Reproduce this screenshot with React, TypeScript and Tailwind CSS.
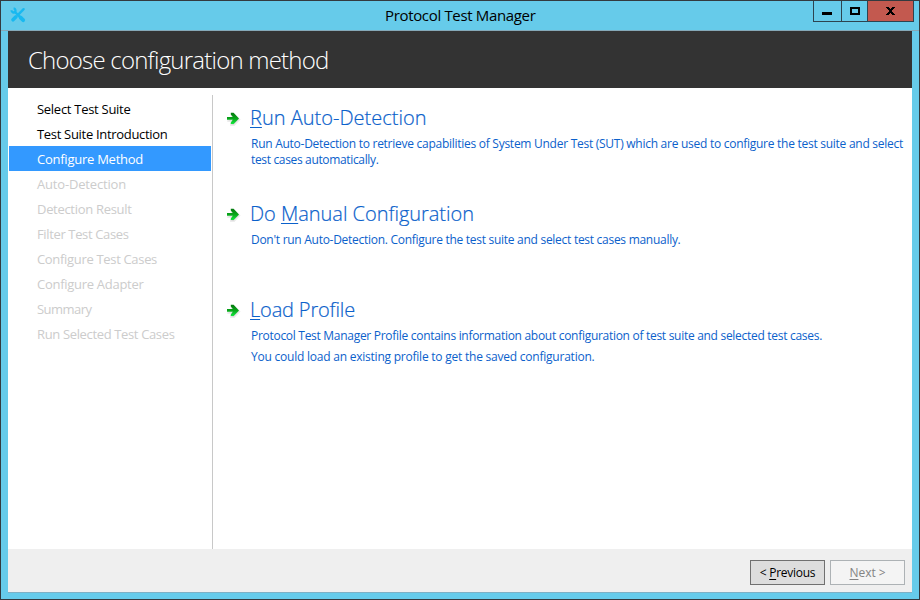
import { ReactNode, useLayoutEffect, useRef, useState } from "react";

/* Single line of text tracked so that it fills a given width. */
function Line({ width, children }: { width: number; children: ReactNode }) {
  const ref = useRef<HTMLSpanElement>(null);
  const [tracking, setTracking] = useState(0);
  useLayoutEffect(() => {
    const el = ref.current;
    if (!el) return;
    const count = (el.textContent ?? "").length;
    setTracking((width - el.getBoundingClientRect().width) / count);
  }, [width]);
  return (
    <span ref={ref} className="inline-block whitespace-pre" style={{ letterSpacing: tracking }}>
      {children}
    </span>
  );
}

function Key({ children }: { children: ReactNode }) {
  return <span className="underline decoration-1 underline-offset-2">{children}</span>;
}

const steps = [
  { label: "Select Test Suite", width: 93.5, state: "done" },
  { label: "Test Suite Introduction", width: 130.5, state: "done" },
  { label: "Configure Method", width: 106, state: "current" },
  { label: "Auto-Detection", width: 89, state: "todo" },
  { label: "Detection Result", width: 94.5, state: "todo" },
  { label: "Filter Test Cases", width: 91.5, state: "todo" },
  { label: "Configure Test Cases", width: 120, state: "todo" },
  { label: "Configure Adapter", width: 106.5, state: "todo" },
  { label: "Summary", width: 54.5, state: "todo" },
  { label: "Run Selected Test Cases", width: 137.5, state: "todo" },
];

const stepStyle: Record<string, string> = {
  done: "text-black",
  current: "bg-[#3399ff] text-white",
  todo: "text-[#cccccc]",
};

function ToolsIcon() {
  return (
    <svg width="16" height="16" viewBox="0 0 16 16" fill="none" stroke="#18b9f0">
      <path d="M4 4 11 11" strokeWidth="2.4" />
      <path d="M1.5 3.2C1.5 5.6 4 6 5 5S5.8 1.8 3.6 1.4" strokeWidth="2.2" />
      <path d="M10.6 10.6 13.2 13.2" strokeWidth="3.8" strokeLinecap="round" />
      <path d="M13.6 2.2 8 7.8" strokeWidth="2.4" strokeLinecap="round" />
      <path d="M6 9.8 3 12.8" strokeWidth="3.6" strokeLinecap="round" />
    </svg>
  );
}

function Arrow() {
  return (
    <svg className="mt-[6px] shrink-0" width="16" height="16" viewBox="0 0 16 16">
      <defs>
        <linearGradient id="arrowGreen" x1="0" y1="0" x2="0" y2="1">
          <stop offset="0" stopColor="#067a10" />
          <stop offset="0.5" stopColor="#08a51a" />
          <stop offset="1" stopColor="#14e83e" />
        </linearGradient>
      </defs>
      <path
        d="M3 8.2h5.5L6.5 5.4V3.4h2.6L14.6 8.6 9.1 14.4H5.8V12.6L8 10.2H3z"
        fill="#c4c4c4"
        stroke="#e4e4e4"
        strokeWidth="1.4"
        opacity="0.7"
      />
      <path d="M2 6.1h5.8L5.8 3.4V1.8h2.8L14 7.4 8.6 13H5.8V11.4L7.8 8.8H2z" fill="url(#arrowGreen)" />
    </svg>
  );
}

function Choice({ title, children }: { title: ReactNode; children: ReactNode }) {
  return (
    <div className="flex h-24 gap-[9px] text-[#0b61cb]">
      <Arrow />
      <div>
        <div className="h-[31px] text-[20px] font-light leading-[26px] [-webkit-text-stroke:0.2px_#0b61cb]">{title}</div>
        <div className="ml-px text-[12px] leading-4">{children}</div>
      </div>
    </div>
  );
}

export default function App() {
  return (
    <div className="flex h-[600px] w-[920px] flex-col overflow-hidden border border-[#333a3f] bg-[#66cbea] font-['Open_Sans','Noto_Sans',sans-serif] text-black">
      <div className="flex h-[30px] shrink-0 border-b border-[#86a9b8]">
        <div className="w-[384px] pl-[9px] pt-[6px]">
          <ToolsIcon />
        </div>
        <div className="grow text-[15px] leading-[28px]">
          <Line width={150.5}>Protocol Test Manager</Line>
        </div>
        <div className="mr-[5px] flex h-[21px] border-x border-b border-[#2d4450]">
          <div className="w-[28px] border-r border-[#2d4450] pl-2 pt-[11px]">
            <div className="h-[3px] w-[10px] bg-black" />
          </div>
          <div className="w-[26px] border-r border-[#2d4450] pl-2 pt-[6px]">
            <div className="h-2 w-[10px] border-2 border-black" />
          </div>
          <div className="flex w-[45px] justify-center bg-[#c3594f] pt-[6px]">
            <svg width="9" height="8" viewBox="0 0 9 8" shapeRendering="crispEdges">
              <path d="M0 0h3v1h1v1h1V1h1V0h3v1H8v1H7v1H6v2h1v1h1v1h1v1H6V7H5V6H4v1H3v1H0V7h1V6h1V5h1V3H2V2H1V1H0z" />
            </svg>
          </div>
        </div>
      </div>

      <div className="mx-[7px] flex h-[562px] shrink-0 flex-col border-b border-[#7eb0c4] bg-white">
        <header className="h-[57px] shrink-0 bg-[#333333] pl-5 text-[24px] font-light leading-[57px] text-white">
          <Line width={300.5}>Choose configuration method</Line>
        </header>

        <div className="flex h-[461px] shrink-0">
          <nav className="mt-[7px] w-[205px] border-r border-[#c8c8c8] pl-px pr-px pt-[1px] text-[13px] leading-[27px]">
            {steps.map((s) => (
              <div key={s.label} className={`h-[25px] pl-7 ${stepStyle[s.state]}`}>
                <Line width={s.width}>{s.label}</Line>
              </div>
            ))}
          </nav>
          <main className="pl-3 pt-[17px]">
            <Choice title={<Line width={176.5}><Key>R</Key>un Auto-Detection</Line>}>
              <Line width={652}>Run Auto-Detection to retrieve capabilities of System Under Test (SUT) which are used to configure the test suite and select</Line>
              <br />
              <Line width={127.5}>test cases automatically.</Line>
            </Choice>
            <Choice title={<Line width={224}>Do <Key>M</Key>anual Configuration</Line>}>
              <Line width={429.5}>Don't run Auto-Detection. Configure the test suite and select test cases manually.</Line>
            </Choice>
            <Choice title={<Line width={105}><Key>L</Key>oad Profile</Line>}>
              <Line width={571}>Protocol Test Manager Profile contains information about configuration of test suite and selected test cases.</Line>
              <div className="mt-[5px]">
                <Line width={343.5}>You could load an existing profile to get the saved configuration.</Line>
              </div>
            </Choice>
          </main>
        </div>

        <footer className="flex grow justify-end gap-[5px] bg-[#efefef] pr-[7px] pt-[11px] text-[12px] leading-[23px]">
          <button className="h-[25px] w-[75px] border border-[#707070] bg-[#dddddd]">
            <Line width={55.5}>&lt; <Key>P</Key>revious</Line>
          </button>
          <button className="h-[25px] w-[75px] border border-[#adb2b5] bg-[#f4f4f4] text-[#838383]" disabled>
            <Line width={36}><Key>N</Key>ext &gt;</Line>
          </button>
        </footer>
      </div>
    </div>
  );
}
